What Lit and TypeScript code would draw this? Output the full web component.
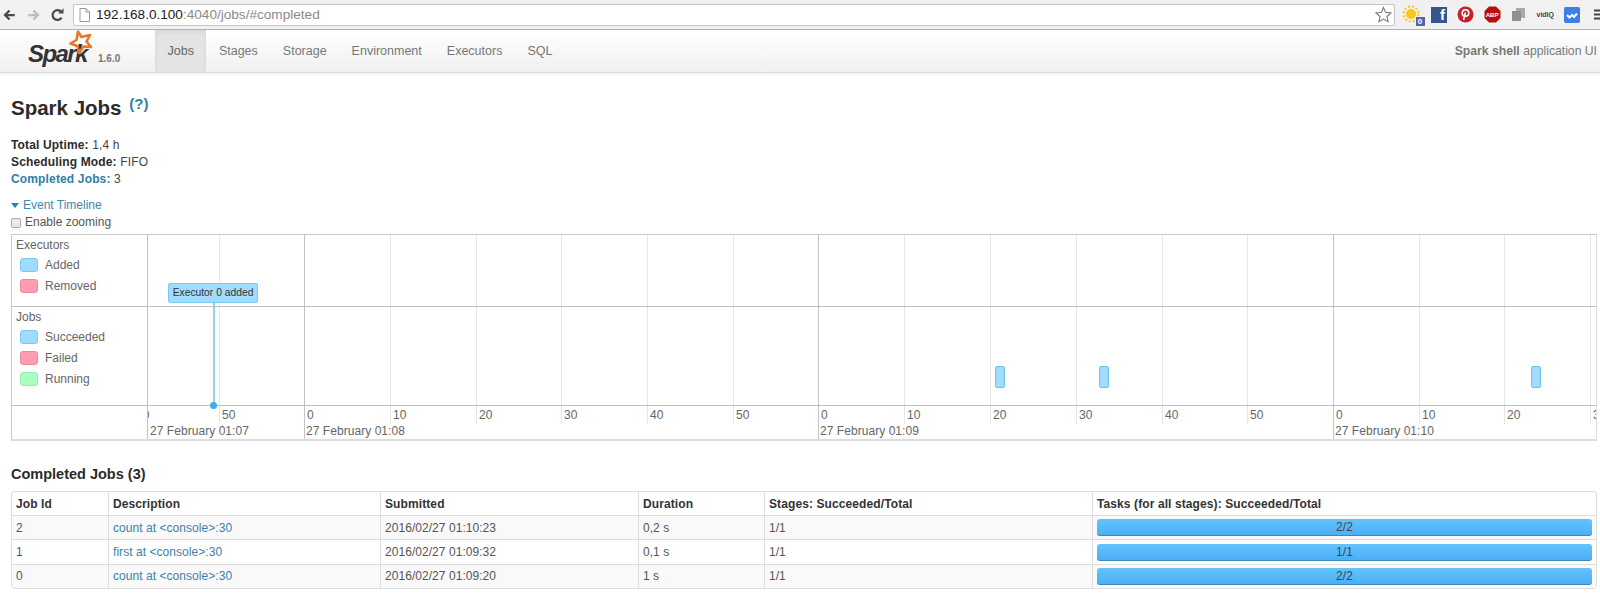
import { LitElement, html, css } from "lit";
import { customElement } from "lit/decorators.js";

const MAJOR = [156, 670, 1185];
const MINOR = [71, 242, 328, 413, 499, 585, 756, 842, 928, 1014, 1099, 1271, 1356, 1442];
const TICKS: [number, string][] = [
  [-12, "40"], [74, "50"], [159, "0"], [245, "10"], [331, "20"], [416, "30"], [502, "40"], [588, "50"],
  [673, "0"], [759, "10"], [845, "20"], [931, "30"], [1017, "40"], [1102, "50"], [1188, "0"], [1274, "10"], [1359, "20"], [1445, "30"],
];
const DATES: [number, string][] = [[2, "27 February 01:07"], [158, "27 February 01:08"], [672, "27 February 01:09"], [1187, "27 February 01:10"]];
const BARS = [847, 951, 1383];
const ROWS = [
  ["2", "count at <console>:30", "2016/02/27 01:10:23", "0,2 s", "1/1", "2/2"],
  ["1", "first at <console>:30", "2016/02/27 01:09:32", "0,1 s", "1/1", "1/1"],
  ["0", "count at <console>:30", "2016/02/27 01:09:20", "1 s", "1/1", "2/2"],
];
const NAV = ["Jobs", "Stages", "Storage", "Environment", "Executors", "SQL"];

@customElement("app-root")
export class AppRoot extends LitElement {
  static styles = css`
    :host { display: block; font-family: "Liberation Sans", Arial, sans-serif; color: #333; background: #fff; height: 594px; overflow: hidden; font-size: 12px; }
    a { color: #3a82a8; text-decoration: none; }
    .chrome { height: 30px; box-sizing: border-box; background: #f1f1f1; border-bottom: 1px solid #b5b5b5; display: flex; align-items: center; padding: 0 0 0 2px; }
    .ic { width: 15px; height: 16px; flex: none; }
    .ic.sp { margin-left: 9px; }
    .omni { margin-left: 8px; width: 1322px; height: 22px; box-sizing: border-box; background: #fff; border: 1px solid #c4c4c4; border-radius: 2px; display: flex; align-items: center; padding: 0 2px 0 5px; font-size: 13.6px; flex: none; }
    .omni .page { flex: none; margin-right: 6px; }
    .omni .host { color: #222; }
    .omni .rest { color: #8a8a8a; }
    .omni .star { margin-left: auto; }
    .exts { display: flex; align-items: center; margin-left: 4px; }
    .ext { width: 26.6px; height: 22px; display: flex; align-items: center; justify-content: center; position: relative; }
    .fb { width: 16px; height: 16px; background: #35558f; color: #fff; font-weight: 700; font-size: 15px; display: flex; align-items: flex-end; justify-content: flex-end; padding-right: 2px; box-sizing: border-box; line-height: 16px; }
    .abp { font-size: 6px; font-weight: 700; color: #fff; position: absolute; left: 0; right: 0; text-align: center; top: 8px; }
    .vid { font-size: 7px; color: #444; font-weight: 700; }
    .badge { position: absolute; right: 1px; bottom: 0; width: 9px; height: 9px; background: #5b62a8; color: #fff; font-size: 8px; line-height: 9px; text-align: center; font-weight: 700; }
    .nav { height: 43px; box-sizing: border-box; background: linear-gradient(#fff, #f0f0f0); border-bottom: 1px solid #dcdcdc; box-shadow: 0 1px 3px rgba(0,0,0,.08); display: flex; align-items: stretch; }
    .brand { width: 155px; flex: none; position: relative; }
    .spark { position: absolute; left: 28px; top: 10px; font-size: 24px; font-weight: 700; font-style: italic; color: #333; letter-spacing: -1.6px; line-height: 28px; }
    .sparkstar { position: absolute; left: 67px; top: 0; }
    .ver { position: absolute; left: 98px; top: 23px; font-size: 10px; font-weight: 700; color: #777; }
    .tab { padding: 0 12.5px; display: flex; align-items: center; color: #777; font-size: 12.5px; }
    .tab.on { background: #e4e4e4; box-shadow: inset 0 2px 4px rgba(0,0,0,.07); color: #666; }
    .app { margin-left: auto; padding-right: 3px; color: #777; font-size: 12.2px; display: flex; align-items: center; }
    .app b { font-weight: 700; }
    .main { padding: 22px 3px 0 11px; }
    h3 { margin: 0; font-size: 20.5px; line-height: 26px; font-weight: 700; color: #2b2b2b; }
    h3 sup { font-size: 15px; color: #2f7fa8; font-weight: 700; vertical-align: baseline; position: relative; top: -6px; margin-left: 2px; }
    .facts { margin: 14px 0 0; padding: 0; list-style: none; line-height: 17px; color: #444; letter-spacing: .15px; }
    .facts b { color: #2b2b2b; }
    .facts .lnk b { color: #2f7fa8; }
    .toggle { margin-top: 9px; line-height: 17px; color: #3f89ad; display: flex; align-items: center; gap: 4px; }
    .caret { width: 0; height: 0; border: 4.5px solid transparent; border-top: 5px solid #2f7fa8; border-bottom: 0; }
    .zoom { line-height: 17px; color: #555; display: flex; align-items: center; gap: 4px; }
    .box { width: 10px; height: 10px; box-sizing: border-box; border: 1px solid #aaa; border-radius: 2px; background: #e9e9e9; }
    .timeline { margin-top: 3px; height: 207px; box-sizing: border-box; border: 1px solid #c8c8c8; border-bottom: 2px solid #ddd; border-right-color: #ddd; display: grid; grid-template-columns: 136px 1fr; grid-template-rows: 72px 99px 1fr; color: #555; }
    .leg { border-right: 1px solid #c0c0c0; border-bottom: 1px solid #c0c0c0; padding: 3px 0 0 4px; }
    .leg.last { border-bottom: 0; }
    .leg h5 { margin: 0 0 1px; font-size: 12px; font-weight: 400; line-height: 15px; color: #666; }
    .li { display: flex; align-items: center; height: 21px; gap: 7px; padding-left: 4px; color: #666; font-size: 12px; }
    .sw { width: 16px; height: 12px; border-radius: 3px; border: 1px solid; flex: none; }
    .blue { background: #a0dcff; border-color: #7cc8ef; }
    .red { background: #ff9cb0; border-color: #ee8a9c; }
    .green { background: #a8ffc0; border-color: #92eeb0; }
    .canvas { grid-column: 2; grid-row: 1 / 4; position: relative; overflow: hidden; }
    .vl { position: absolute; top: 0; width: 1px; background: #e6e6e6; height: 189px; }
    .vl.major { background: #c4c4c4; height: 100%; }
    .hl { position: absolute; left: 0; right: 0; height: 1px; background: #c0c0c0; }
    .tick { position: absolute; top: 173px; font-size: 12px; line-height: 14px; color: #666; }
    .date { position: absolute; top: 189px; font-size: 12px; line-height: 14px; color: #666; white-space: nowrap; letter-spacing: .05px; }
    .bar { position: absolute; top: 131px; width: 10px; height: 22px; box-sizing: border-box; background: #a0dcff; border: 1px solid #6cc0ea; border-radius: 2px; }
    .evt { position: absolute; left: 20px; top: 48px; width: 90px; height: 20px; box-sizing: border-box; background: #a0dcff; border: 1px solid #7cc8ef; border-radius: 2px; font-size: 10.3px; line-height: 18px; text-align: center; color: #333; }
    .stem { position: absolute; left: 65px; top: 68px; width: 2px; height: 102px; background: #8fd2f2; }
    .dot { position: absolute; left: 62px; top: 167px; width: 7px; height: 7px; border-radius: 50%; background: #3eaee8; }
    h4 { margin: 23px 0 0; font-size: 14.5px; line-height: 20px; font-weight: 700; color: #2b2b2b; }
    table { margin-top: 7px; width: 1586px; border-collapse: separate; border-spacing: 0; table-layout: fixed; border: 1px solid #ddd; border-radius: 3px; font-size: 12px; }
    th { text-align: left; font-weight: 700; color: #333; padding: 0 4px; height: 23px; letter-spacing: .1px; border-left: 1px solid #ddd; }
    td { padding: 0 4px; height: 23.4px; border-top: 1px solid #ddd; border-left: 1px solid #ddd; color: #555; letter-spacing: .05px; }
    th:first-child, td:first-child { border-left: 0; }
    tr.odd td { background: #f9f9f9; }
    .progress { height: 17px; border-radius: 3px; background: linear-gradient(#64c3ff, #4aaef2); box-shadow: inset 0 -1px 0 rgba(0,0,0,.22); text-align: center; line-height: 17px; color: #444; }
  `;

  render() {
    return html`
      <div class="chrome">
        <svg class="ic" viewBox="0 0 20 20"><path d="M17 10H5M10 4l-6 6 6 6" fill="none" stroke="#4a4a4a" stroke-width="3"/></svg>
        <svg class="ic sp" viewBox="0 0 20 20"><path d="M3 10h12M10 4l6 6-6 6" fill="none" stroke="#bdbdbd" stroke-width="3"/></svg>
        <svg class="ic sp" viewBox="0 0 20 20"><path d="M15.5 13.5A6.500 6.500 0 1 1 15 6" fill="none" stroke="#4a4a4a" stroke-width="3"/><path d="M11 8h7V1z" fill="#4a4a4a"/></svg>
        <div class="omni">
          <svg class="page" width="11" height="14" viewBox="0 0 11 14"><path d="M1 .5h6l3.500 3.500v9.500H1z M7 .5V4h3.500" fill="#fff" stroke="#999"/></svg>
          <span class="host">192.168.0.100</span><span class="rest">:4040/jobs/#completed</span>
          <svg class="star" width="17" height="17" viewBox="0 0 24 24"><path d="M12 2l3 7 7.500.8-5.600 5 1.600 7.400L12 18.400 5.500 22.200l1.600-7.400-5.600-5L9 9z" fill="#fff" stroke="#777" stroke-width="1.500"/></svg>
        </div>
        <div class="exts">
          <div class="ext"><svg width="20" height="20" viewBox="0 0 20 20"><circle cx="9" cy="9" r="5" fill="#f7c716"/><circle cx="9" cy="9" r="7.500" fill="none" stroke="#f7c716" stroke-width="2" stroke-dasharray="2 2"/></svg><span class="badge">0</span></div>
          <div class="ext"><span class="fb">f</span></div>
          <div class="ext"><svg width="17" height="17" viewBox="0 0 17 17"><circle cx="8.500" cy="8.500" r="8" fill="#c8202e"/><circle cx="8.500" cy="7" r="3.300" fill="none" stroke="#fff" stroke-width="1.600"/><path d="M8.500 6.500L6.500 14" stroke="#fff" stroke-width="1.600"/></svg></div>
          <div class="ext"><svg width="17" height="17" viewBox="0 0 17 17"><path d="M5 .5h7L16.500 5v7L12 16.500H5L.5 12V5z" fill="#b80e0e"/></svg><span class="abp">ABP</span></div>
          <div class="ext"><svg width="15" height="15" viewBox="0 0 15 15"><rect x="5" y="1" width="9" height="10" fill="#aaa"/><rect x="1" y="4" width="9" height="10" fill="#8f8f8f"/></svg></div>
          <div class="ext"><span class="vid">vidIQ</span></div>
          <div class="ext"><svg width="16" height="16" viewBox="0 0 16 16"><rect width="16" height="16" rx="2" fill="#3d7fe6"/><path d="M3 8l2.500 2.500L8 8l2 2 3-3.500" fill="none" stroke="#fff" stroke-width="2"/></svg></div>
          <div class="ext"><svg width="9" height="11" viewBox="0 0 9 11"><path d="M0 1.500h9M0 5.500h9M0 9.500h9" stroke="#444" stroke-width="2"/></svg></div>
        </div>
      </div>

      <div class="nav">
        <div class="brand">
          <span class="spark">Spark</span>
          <svg class="sparkstar" width="28" height="26" viewBox="0 0 28 26"><path d="M11 1.500l3.500 5.500 8.500-2-3.500 6.500L24 17l-7.500-.5L12 23l-1.500-7-7-2.500 6-3.500z" fill="none" stroke="#e8792a" stroke-width="2.600" stroke-linejoin="round"/></svg>
          <span class="ver">1.6.0</span>
        </div>
        ${NAV.map((n, i) => html`<div class="tab ${i === 0 ? "on" : ""}">${n}</div>`)}
        <div class="app"><span><b>Spark shell</b> application UI</span></div>
      </div>

      <div class="main">
        <h3>Spark Jobs <sup>(?)</sup></h3>
        <ul class="facts">
          <li><b>Total Uptime:</b> 1,4 h</li>
          <li><b>Scheduling Mode:</b> FIFO</li>
          <li class="lnk"><b>Completed Jobs:</b> 3</li>
        </ul>
        <div class="toggle"><span class="caret"></span><span>Event Timeline</span></div>
        <div class="zoom"><span class="box"></span><span>Enable zooming</span></div>

        <div class="timeline">
          <div class="leg" style="grid-column:1;grid-row:1">
            <h5>Executors</h5>
            <div class="li"><span class="sw blue"></span>Added</div>
            <div class="li"><span class="sw red"></span>Removed</div>
          </div>
          <div class="leg" style="grid-column:1;grid-row:2">
            <h5>Jobs</h5>
            <div class="li"><span class="sw blue"></span>Succeeded</div>
            <div class="li"><span class="sw red"></span>Failed</div>
            <div class="li"><span class="sw green"></span>Running</div>
          </div>
          <div class="leg last" style="grid-column:1;grid-row:3"></div>
          <div class="canvas">
            ${MINOR.map((x) => html`<div class="vl" style="left:${x}px"></div>`)}
            ${MAJOR.map((x) => html`<div class="vl major" style="left:${x}px"></div>`)}
            <div class="hl" style="top:71px"></div>
            <div class="hl" style="top:170px"></div>
            ${TICKS.map(([x, t]) => html`<span class="tick" style="left:${x}px">${t}</span>`)}
            ${DATES.map(([x, t]) => html`<span class="date" style="left:${x}px">${t}</span>`)}
            ${BARS.map((x) => html`<div class="bar" style="left:${x}px"></div>`)}
            <div class="stem"></div>
            <div class="dot"></div>
            <div class="evt">Executor 0 added</div>
          </div>
        </div>

        <h4>Completed Jobs (3)</h4>
        <table>
          <colgroup>
            <col style="width:96px" /><col style="width:272px" /><col style="width:258px" />
            <col style="width:126px" /><col style="width:328px" /><col />
          </colgroup>
          <thead>
            <tr>
              <th>Job Id</th><th>Description</th><th>Submitted</th><th>Duration</th>
              <th>Stages: Succeeded/Total</th><th>Tasks (for all stages): Succeeded/Total</th>
            </tr>
          </thead>
          <tbody>
            ${ROWS.map((r, i) => html`
              <tr class=${i % 2 === 0 ? "odd" : ""}>
                <td>${r[0]}</td><td><a>${r[1]}</a></td><td>${r[2]}</td><td>${r[3]}</td><td>${r[4]}</td>
                <td><div class="progress">${r[5]}</div></td>
              </tr>`)}
          </tbody>
        </table>
      </div>
    `;
  }
}
